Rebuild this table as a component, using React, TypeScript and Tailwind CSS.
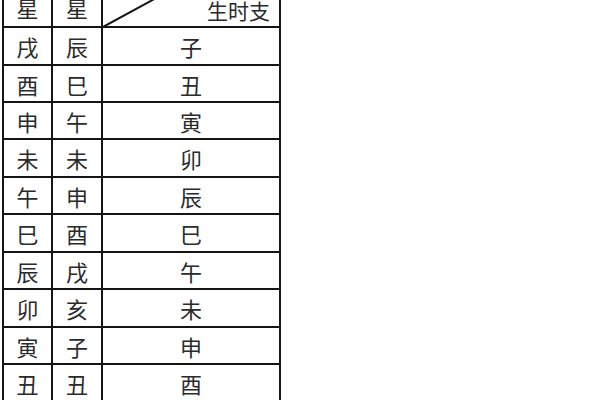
const rows: [string, string, string][] = [
  ['戌', '辰', '子'],
  ['酉', '巳', '丑'],
  ['申', '午', '寅'],
  ['未', '未', '卯'],
  ['午', '申', '辰'],
  ['巳', '酉', '巳'],
  ['辰', '戌', '午'],
  ['卯', '亥', '未'],
  ['寅', '子', '申'],
  ['丑', '丑', '酉'],
];

const font = { fontFamily: '"Noto Sans CJK SC", "Noto Sans", sans-serif' };

export default function App() {
  return (
    <div className="h-[400px] w-[600px] overflow-hidden bg-white" style={font}>
      <div className="ml-[2px] mt-[-71px] grid w-[279px] grid-cols-[47px_48px_176px] grid-rows-[95px_36px_35px_35px_36px_35px_36px_35px_36px_35px_36px] gap-[2px] bg-[#151515] p-[2px] text-[22px] leading-none text-[#2b2b2b]">
        <div className="flex items-end justify-center bg-white pb-[8px]">星</div>
        <div className="flex items-end justify-center bg-white pb-[8px]">星</div>
        <div className="relative flex items-end justify-end bg-white pb-[5px] pr-[9px] text-[21px]">
          <svg
            className="absolute inset-0 h-full w-full"
            viewBox="0 0 176 95"
            preserveAspectRatio="none"
          >
            <line x1="0" y1="96" x2="176" y2="0" stroke="#151515" strokeWidth="2" />
          </svg>
          <span className="relative">生时支</span>
        </div>
        {rows.map(([a, b, c], i) => (
          <div key={i} className="contents">
            <div className="flex items-center justify-center bg-white">{a}</div>
            <div className="flex items-center justify-center bg-white">{b}</div>
            <div className="flex items-center justify-center bg-white">{c}</div>
          </div>
        ))}
      </div>
    </div>
  );
}
